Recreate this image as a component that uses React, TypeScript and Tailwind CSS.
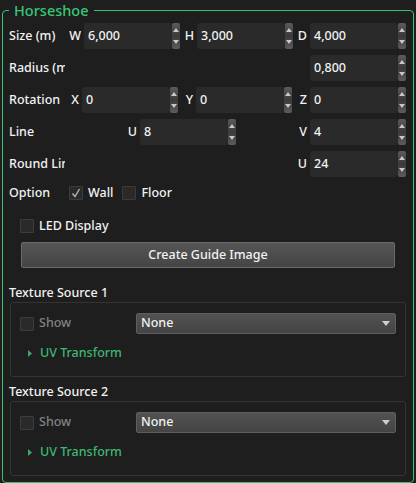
import React from 'react';

const font = { fontFamily: '"Noto Sans", "Liberation Sans", sans-serif' };

function Spinner() {
  return (
    <div className="flex h-full w-[8px] flex-col items-center justify-between rounded-[2px] bg-gradient-to-b from-[#5c5c5c] via-[#3a3a3a] to-[#5c5c5c] py-[5px]">
      <svg width="6" height="4" viewBox="0 0 6 4">
        <path d="M3 0 L6 4 L0 4 Z" fill="#c8c8c8" />
      </svg>
      <svg width="6" height="4" viewBox="0 0 6 4">
        <path d="M0 0 L6 0 L3 4 Z" fill="#c8c8c8" />
      </svg>
    </div>
  );
}

function NumField({ value }: { value: string }) {
  return (
    <div className="flex h-[26px] w-[96px] shrink-0">
      <div className="flex flex-1 items-center rounded-[3px] bg-[#2a2a2a] pl-[4px] text-[#f2f2f2]">{value}</div>
      <Spinner />
    </div>
  );
}

function Axis({ label, w }: { label: string; w: string }) {
  return <div className={`${w} shrink-0 pr-[3px] text-right`}>{label}</div>;
}

function Checkbox({ checked = false }: { checked?: boolean }) {
  return (
    <div className="flex h-[14px] w-[14px] shrink-0 items-center justify-center rounded-[1px] border border-[#3c3c3c] bg-[#2a2a2a]">
      {checked && (
        <svg width="10" height="10" viewBox="0 0 10 10">
          <path d="M1.5 5.5 L4 8.5 L8.5 1" stroke="#b4b4b4" strokeWidth="1.4" fill="none" />
        </svg>
      )}
    </div>
  );
}

function TextureSource({ index, first }: { index: number; first?: boolean }) {
  return (
    <div className={first ? 'mt-[10px]' : ''}>
      <div className="h-[24px] pt-[6px] leading-[18px] text-[#f2f2f2]">Texture Source {index}</div>
      <div className="ml-[1px] rounded-[3px] border border-[#343434] px-[9px] pt-[10px] pb-[14px]">
        <div className="flex h-[21px] items-center">
          <div className="flex w-[116px] items-center gap-[5px]">
            <Checkbox />
            <span className="text-[#828282]">Show</span>
          </div>
          <div className="flex h-[21px] flex-1 items-center justify-between rounded-[2px] border border-[#5e5e5e] bg-gradient-to-b from-[#525252] to-[#444444] pl-[4px] pr-[5px] text-[#f2f2f2]">
            <span>None</span>
            <svg width="8" height="5" viewBox="0 0 8 5">
              <path d="M0 0 L8 0 L4 5 Z" fill="#cfcfcf" />
            </svg>
          </div>
        </div>
        <div className="mt-[11px] flex h-[17px] items-center pl-[8px] text-[#3cb874]">
          <svg width="4" height="7" viewBox="0 0 4 7">
            <path d="M0 0 L4 3.5 L0 7 Z" fill="#3aa86c" />
          </svg>
          <span className="ml-[8px]">UV Transform</span>
        </div>
      </div>
    </div>
  );
}

export default function App() {
  return (
    <div className="h-[483px] w-[416px] bg-[#1e1e1e] pt-[1px] text-[12.5px] font-medium text-[#f2f2f2]" style={font}>
      <fieldset className="mx-[2px] rounded-[4px] border border-[#33c173] pr-[7px] pb-[6px] pl-[6px]">
        <legend className="px-[5px] text-[14.5px] leading-[18px] text-[#38c776]">Horseshoe</legend>
        <div className="mt-[4px] flex flex-col gap-[6px]">
          <div className="flex h-[26px] items-center">
            <div className="w-[55px] shrink-0">Size (m)</div>
            <Axis label="W" w="w-[20px]" />
            <NumField value="6,000" />
            <Axis label="H" w="w-[17px]" />
            <NumField value="3,000" />
            <Axis label="D" w="w-[17px]" />
            <NumField value="4,000" />
          </div>
          <div className="flex h-[26px] items-center">
            <div className="w-[56px] shrink-0 overflow-hidden whitespace-nowrap">Radius (m)</div>
            <div className="ml-auto">
              <NumField value="0,800" />
            </div>
          </div>
          <div className="flex h-[26px] items-center">
            <div className="w-[55px] shrink-0">Rotation</div>
            <Axis label="X" w="w-[18px]" />
            <NumField value="0" />
            <Axis label="Y" w="w-[18px]" />
            <NumField value="0" />
            <Axis label="Z" w="w-[18px]" />
            <NumField value="0" />
          </div>
          <div className="flex h-[26px] items-center">
            <div className="w-[113px] shrink-0">Line</div>
            <Axis label="U" w="w-[18px]" />
            <NumField value="8" />
            <Axis label="V" w="w-[74px]" />
            <NumField value="4" />
          </div>
          <div className="flex h-[26px] items-center">
            <div className="w-[56px] shrink-0 overflow-hidden whitespace-nowrap">Round Line</div>
            <div className="ml-auto flex items-center">
              <Axis label="U" w="w-[18px]" />
              <NumField value="24" />
            </div>
          </div>
          <div className="flex h-[20px] items-center">
            <div className="w-[60px] shrink-0">Option</div>
            <Checkbox checked />
            <span className="ml-[5px]">Wall</span>
            <div className="ml-[9px]">
              <Checkbox />
            </div>
            <span className="ml-[5px]">Floor</span>
          </div>
        </div>
        <div className="mt-[13px] flex h-[20px] items-center pl-[11px]">
          <Checkbox />
          <span className="ml-[5px]">LED Display</span>
        </div>
        <button className="mt-[6px] ml-[12px] flex h-[26px] w-[374px] items-center justify-center rounded-[2px] border border-[#6a6a6a] bg-gradient-to-b from-[#555555] to-[#454545] text-[#f2f2f2]">
          Create Guide Image
        </button>
        <TextureSource index={1} first />
        <TextureSource index={2} />
      </fieldset>
    </div>
  );
}
